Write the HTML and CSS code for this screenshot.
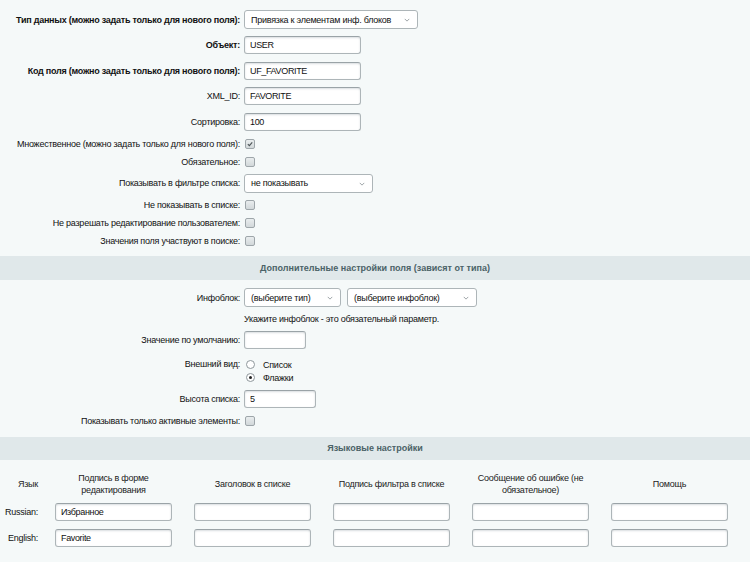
FILE: index.html
```html
<!DOCTYPE html>
<html lang="ru">
<head>
<meta charset="utf-8">
<link rel="stylesheet" href="styles.css">
</head>
<body>
<div class="page">
  <div class="form">
    <div class="row r-input"><div class="lbl b">Тип данных (можно задать только для нового поля):</div><div class="val"><div class="sel w174">Привязка к элементам инф. блоков<svg class="chev" viewBox="0 0 8 5"><path d="M1 1l3 3 3-3" /></svg></div></div></div>
    <div class="row r-input"><div class="lbl b">Объект:</div><div class="val"><input class="inp w117" value="USER"></div></div>
    <div class="row r-input"><div class="lbl b">Код поля (можно задать только для нового поля):</div><div class="val"><input class="inp w117" value="UF_FAVORITE"></div></div>
    <div class="row r-input"><div class="lbl">XML_ID:</div><div class="val"><input class="inp w117" value="FAVORITE"></div></div>
    <div class="row r-input"><div class="lbl">Сортировка:</div><div class="val"><input class="inp w117" value="100"></div></div>
    <div class="row r-check"><div class="lbl">Множественное (можно задать только для нового поля):</div><div class="val"><span class="cb checked"><svg viewBox="0 0 10 10"><path d="M2.3 5.2l1.9 1.9 3.6-4.2" /></svg></span></div></div>
    <div class="row r-check"><div class="lbl">Обязательное:</div><div class="val"><span class="cb"></span></div></div>
    <div class="row r-input"><div class="lbl">Показывать в фильтре списка:</div><div class="val"><div class="sel w129">не показывать<svg class="chev" viewBox="0 0 8 5"><path d="M1 1l3 3 3-3" /></svg></div></div></div>
    <div class="row r-check"><div class="lbl">Не показывать в списке:</div><div class="val"><span class="cb"></span></div></div>
    <div class="row r-check"><div class="lbl">Не разрешать редактирование пользователем:</div><div class="val"><span class="cb"></span></div></div>
    <div class="row r-check"><div class="lbl">Значения поля участвуют в поиске:</div><div class="val"><span class="cb"></span></div></div>
  </div>

  <div class="heading h1">Дополнительные настройки поля (зависят от типа)</div>

  <div class="form f2">
    <div class="row r-input"><div class="lbl">Инфоблок:</div><div class="val pair"><div class="sel w97">(выберите тип)<svg class="chev" viewBox="0 0 8 5"><path d="M1 1l3 3 3-3" /></svg></div><div class="sel w130">(выберите инфоблок)<svg class="chev" viewBox="0 0 8 5"><path d="M1 1l3 3 3-3" /></svg></div></div></div>
    <div class="row r-text"><div class="lbl"></div><div class="val">Укажите инфоблок - это обязательный параметр.</div></div>
    <div class="row r-input"><div class="lbl">Значение по умолчанию:</div><div class="val"><input class="inp w62" value=""></div></div>
    <div class="row r-radio"><div class="lbl">Внешний вид:</div><div class="val radios">
      <div class="radio-line"><span class="rb"></span>Список</div>
      <div class="radio-line"><span class="rb on"></span>Флажки</div>
    </div></div>
    <div class="row r-input"><div class="lbl">Высота списка:</div><div class="val"><input class="inp w72" value="5"></div></div>
    <div class="row r-check"><div class="lbl">Показывать только активные элементы:</div><div class="val"><span class="cb"></span></div></div>
  </div>

  <div class="heading h2">Языковые настройки</div>

  <div class="lang">
    <div class="lh lang-col">Язык</div>
    <div class="lh">Подпись в форме редактирования</div>
    <div class="lh">Заголовок в списке</div>
    <div class="lh">Подпись фильтра в списке</div>
    <div class="lh">Сообщение об ошибке (не обязательное)</div>
    <div class="lh">Помощь</div>

    <div class="ll">Russian:</div>
    <div class="lc"><input class="inp w117" value="Избранное"></div>
    <div class="lc"><input class="inp w117" value=""></div>
    <div class="lc"><input class="inp w117" value=""></div>
    <div class="lc"><input class="inp w117" value=""></div>
    <div class="lc"><input class="inp w117" value=""></div>

    <div class="ll">English:</div>
    <div class="lc"><input class="inp w117" value="Favorite"></div>
    <div class="lc"><input class="inp w117" value=""></div>
    <div class="lc"><input class="inp w117" value=""></div>
    <div class="lc"><input class="inp w117" value=""></div>
    <div class="lc"><input class="inp w117" value=""></div>
  </div>
</div>
</body>
</html>
```

FILE: styles.css
```css
html, body {
  margin: 0;
  padding: 0;
  background: #f5f9f9;
}
body {
  font-family: "Liberation Sans", Arial, sans-serif;
  font-size: 9px;
  letter-spacing: -0.25px;
  color: #111;
  width: 750px;
  height: 562px;
  overflow: hidden;
}
.page {
  padding-top: 7px;
}
.form {
  display: flex;
  flex-direction: column;
}
.row {
  display: grid;
  grid-template-columns: 240px 1fr;
  column-gap: 4px;
  align-items: center;
}
.r-input { min-height: 25.5px; }
.r-check { min-height: 18px; }
.r-text { min-height: 17px; }
.r-radio { align-items: start; padding: 5px 0 2px; }
.lbl {
  text-align: right;
  white-space: nowrap;
}
.lbl.b { font-weight: bold; }
.val {
  display: flex;
  align-items: center;
}
.pair { gap: 6px; }

.inp {
  box-sizing: border-box;
  height: 18px;
  border: 1px solid #adb5b8;
  border-top-color: #9aa3a7;
  border-radius: 3px;
  background: #fff;
  box-shadow: inset 0 1px 2px rgba(170, 180, 184, 0.45);
  font-family: "Liberation Sans", Arial, sans-serif;
  font-size: 9px;
  letter-spacing: -0.35px;
  color: #111;
  padding: 0 5px;
  margin: 0;
  outline: none;
}
.sel {
  box-sizing: border-box;
  height: 19px;
  border: 1px solid #adb5b8;
  border-radius: 3px;
  background: #fff;
  position: relative;
  display: flex;
  align-items: center;
  padding: 0 6px;
  color: #111;
  white-space: nowrap;
}
.chev {
  position: absolute;
  right: 7px;
  top: 7px;
  width: 6px;
  height: 4px;
  fill: none;
  stroke: #8a9296;
  stroke-width: 1.1;
}
.w174 { width: 174px; }
.w117 { width: 117px; }
.w129 { width: 129px; }
.w97 { width: 97px; }
.w130 { width: 130px; }
.w62 { width: 62px; }
.w72 { width: 72px; }

.cb {
  box-sizing: border-box;
  width: 10px;
  height: 10px;
  border: 1px solid #9ea6aa;
  border-radius: 2px;
  background: linear-gradient(#e9edee, #d2d8da);
  display: inline-flex;
  margin-left: 1px;
}
.cb svg {
  width: 8px;
  height: 8px;
  fill: none;
  stroke: #4d5558;
  stroke-width: 1.4;
}
.radios {
  flex-direction: column;
  align-items: flex-start;
}
.radio-line {
  display: flex;
  align-items: center;
  height: 13px;
}
.rb {
  box-sizing: border-box;
  width: 9px;
  height: 9px;
  border: 1px solid #8f989c;
  border-radius: 50%;
  background: #fff;
  margin: 0 8px 0 2px;
  display: inline-flex;
  align-items: center;
  justify-content: center;
}
.rb.on::after {
  content: "";
  width: 3px;
  height: 3px;
  border-radius: 50%;
  background: #222;
}
.r-radio .lbl { padding-top: 1px; }

.heading {
  height: 24px;
  background: #e0e8ea;
  color: #4b6267;
  font-weight: bold;
  letter-spacing: 0;
  display: flex;
  align-items: center;
  justify-content: center;
}
.h1 { margin-top: 6px; }
.f2 { padding-top: 5px; }
.h2 { margin-top: 7px; height: 23px; }

.lang {
  display: grid;
  grid-template-columns: 44px repeat(5, 139px);
  grid-template-rows: 39px 26.5px 26.5px;
  align-items: center;
}
.lh {
  box-sizing: border-box;
  height: 100%;
  display: flex;
  align-items: center;
  justify-content: center;
  text-align: center;
  color: #222;
  padding: 10px 11px 0;
  line-height: 12px;
}
.lh.lang-col {
  justify-content: flex-end;
  padding: 10px 6px 0 0;
}
.ll {
  text-align: right;
  padding-right: 6px;
}
.lc {
  display: flex;
  justify-content: center;
}
```
